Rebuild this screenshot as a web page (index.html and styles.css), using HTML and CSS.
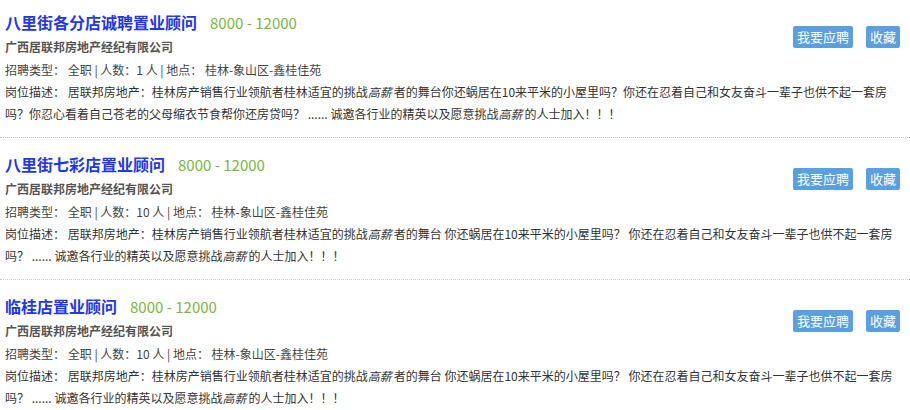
FILE: index.html
```html
<!DOCTYPE html>
<html lang="zh-CN">
<head>
  <meta charset="UTF-8" />
  <meta name="viewport" content="width=device-width, initial-scale=1.0"/>
  <title>职位列表</title>
  <link rel="stylesheet" href="styles.css">
</head>
<body>
  <div class="job-list">

    <div class="job">
      <div class="job-actions">
        <a class="btn" href="#">我要应聘</a>
        <a class="btn" href="#">收藏</a>
      </div>
      <h3 class="job-title"><a href="#">八里街各分店诚聘置业顾问</a><span class="salary">8000 - 12000</span></h3>
      <p class="company">广西居联邦房地产经纪有限公司</p>
      <p class="meta">招聘类型：&nbsp;全职 | 人数：1 人 | 地点：&nbsp;桂林-象山区-鑫桂佳苑</p>
      <p class="desc">岗位描述：&nbsp;居联邦房地产：桂林房产销售行业领航者桂林适宜的挑战<em>高薪</em>者的舞台你还蜗居在10来平米的小屋里吗？你还在忍着自己和女友奋斗一辈子也供不起一套房吗？你忍心看着自己苍老的父母缩衣节食帮你还房贷吗？&nbsp;...... 诚邀各行业的精英以及愿意挑战<em>高薪</em>的人士加入！！！</p>
    </div>

    <div class="job">
      <div class="job-actions">
        <a class="btn" href="#">我要应聘</a>
        <a class="btn" href="#">收藏</a>
      </div>
      <h3 class="job-title"><a href="#">八里街七彩店置业顾问</a><span class="salary">8000 - 12000</span></h3>
      <p class="company">广西居联邦房地产经纪有限公司</p>
      <p class="meta">招聘类型：&nbsp;全职 | 人数：10 人 | 地点：&nbsp;桂林-象山区-鑫桂佳苑</p>
      <p class="desc">岗位描述：&nbsp;居联邦房地产：桂林房产销售行业领航者桂林适宜的挑战<em>高薪</em>者的舞台 你还蜗居在10来平米的小屋里吗？ 你还在忍着自己和女友奋斗一辈子也供不起一套房吗？&nbsp;...... 诚邀各行业的精英以及愿意挑战<em>高薪</em>的人士加入！！！</p>
    </div>

    <div class="job">
      <div class="job-actions">
        <a class="btn" href="#">我要应聘</a>
        <a class="btn" href="#">收藏</a>
      </div>
      <h3 class="job-title"><a href="#">临桂店置业顾问</a><span class="salary">8000 - 12000</span></h3>
      <p class="company">广西居联邦房地产经纪有限公司</p>
      <p class="meta">招聘类型：&nbsp;全职 | 人数：10 人 | 地点：&nbsp;桂林-象山区-鑫桂佳苑</p>
      <p class="desc">岗位描述：&nbsp;居联邦房地产：桂林房产销售行业领航者桂林适宜的挑战<em>高薪</em>者的舞台 你还蜗居在10来平米的小屋里吗？ 你还在忍着自己和女友奋斗一辈子也供不起一套房吗？&nbsp;...... 诚邀各行业的精英以及愿意挑战<em>高薪</em>的人士加入！！！</p>
    </div>

  </div>
</body>
</html>
```

FILE: styles.css
```css
body {
  margin: 0;
  font-family: "Noto Sans CJK SC", "Noto Sans", sans-serif;
  background: #ffffff;
  color: #333;
}

.job {
  padding: 14px 14px 12px 5px;
  border-bottom: 1px dotted #c8c8c8;
}

.job:first-child {
  padding-top: 10px;
}

.job-actions {
  float: right;
  display: flex;
  gap: 13px;
  margin-top: 16px;
  margin-right: -4px;
}

.btn {
  display: block;
  padding: 0 4px;
  line-height: 22px;
  font-size: 13px;
  color: #fff;
  background: #5aa0e0;
  border-radius: 2px;
  text-decoration: none;
}

.job-title {
  margin: 0;
  font-size: 16px;
  line-height: 24px;
  font-weight: bold;
}

.job-title a {
  color: #2236f0;
  text-decoration: none;
}

.salary {
  margin-left: 13px;
  font-size: 15px;
  font-weight: normal;
  color: #79b83c;
}

.company {
  margin: 0;
  font-size: 12px;
  line-height: 23px;
  font-weight: bold;
  color: #555;
}

.meta {
  margin: 0;
  font-size: 12px;
  line-height: 23px;
  color: #444;
}

.desc {
  margin: 0;
  font-size: 12px;
  line-height: 22px;
  color: #333;
}

.desc em {
  font-style: italic;
  padding-right: 2px;
}
```
